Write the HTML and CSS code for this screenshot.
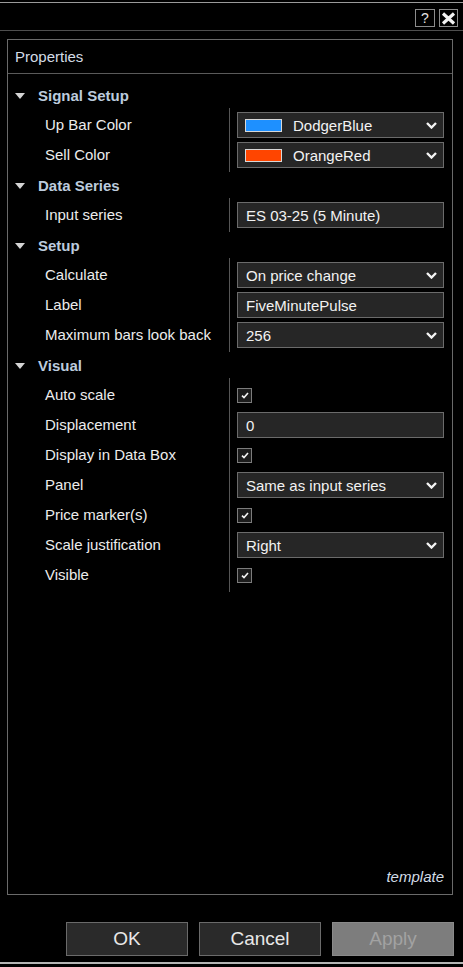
FILE: index.html
```html
<!DOCTYPE html>
<html>
<head>
<meta charset="utf-8">
<link rel="stylesheet" href="styles.css">
</head>
<body>
<div class="window">
  <div class="titlebar">
    <div class="tbtn help">?</div>
    <div class="tbtn close"><svg width="15" height="13" viewBox="0 0 15 13"><path d="M2 1.5 L13 11.5 M13 1.5 L2 11.5" stroke="#f2f2f2" stroke-width="3.2" stroke-linecap="butt"/></svg></div>
  </div>
  <div class="panel">
    <div class="panel-header">Properties</div>
    <div class="panel-body">
      <section class="group">
        <div class="group-head"><span class="caret"></span>Signal Setup</div>
        <div class="props">
          <div class="labels">
            <div class="label">Up Bar Color</div>
            <div class="label">Sell Color</div>
          </div>
          <div class="values">
            <div class="cell"><div class="field select swatched"><span class="swatch blue"></span><span class="text">DodgerBlue</span><svg class="chev" width="11" height="7" viewBox="0 0 11 7"><path d="M1 1 L5.5 5.5 L10 1" fill="none" stroke="#f4f4f4" stroke-width="2.4"/></svg></div></div>
            <div class="cell"><div class="field select swatched"><span class="swatch red"></span><span class="text">OrangeRed</span><svg class="chev" width="11" height="7" viewBox="0 0 11 7"><path d="M1 1 L5.5 5.5 L10 1" fill="none" stroke="#f4f4f4" stroke-width="2.4"/></svg></div></div>
          </div>
        </div>
      </section>
      <section class="group">
        <div class="group-head"><span class="caret"></span>Data Series</div>
        <div class="props">
          <div class="labels">
            <div class="label">Input series</div>
          </div>
          <div class="values">
            <div class="cell"><div class="field"><span class="text">ES 03-25 (5 Minute)</span></div></div>
          </div>
        </div>
      </section>
      <section class="group">
        <div class="group-head"><span class="caret"></span>Setup</div>
        <div class="props">
          <div class="labels">
            <div class="label">Calculate</div>
            <div class="label">Label</div>
            <div class="label">Maximum bars look back</div>
          </div>
          <div class="values">
            <div class="cell"><div class="field select"><span class="text">On price change</span><svg class="chev" width="11" height="7" viewBox="0 0 11 7"><path d="M1 1 L5.5 5.5 L10 1" fill="none" stroke="#f4f4f4" stroke-width="2.4"/></svg></div></div>
            <div class="cell"><div class="field"><span class="text">FiveMinutePulse</span></div></div>
            <div class="cell"><div class="field select"><span class="text">256</span><svg class="chev" width="11" height="7" viewBox="0 0 11 7"><path d="M1 1 L5.5 5.5 L10 1" fill="none" stroke="#f4f4f4" stroke-width="2.4"/></svg></div></div>
          </div>
        </div>
      </section>
      <section class="group">
        <div class="group-head"><span class="caret"></span>Visual</div>
        <div class="props">
          <div class="labels">
            <div class="label">Auto scale</div>
            <div class="label">Displacement</div>
            <div class="label">Display in Data Box</div>
            <div class="label">Panel</div>
            <div class="label">Price marker(s)</div>
            <div class="label">Scale justification</div>
            <div class="label">Visible</div>
          </div>
          <div class="values">
            <div class="cell"><span class="check"><svg width="8" height="7" viewBox="0 0 8 7"><path d="M1 3.6 L3 5.6 L7 1" fill="none" stroke="#f4f4f4" stroke-width="1.6"/></svg></span></div>
            <div class="cell"><div class="field"><span class="text">0</span></div></div>
            <div class="cell"><span class="check"><svg width="8" height="7" viewBox="0 0 8 7"><path d="M1 3.6 L3 5.6 L7 1" fill="none" stroke="#f4f4f4" stroke-width="1.6"/></svg></span></div>
            <div class="cell"><div class="field select"><span class="text">Same as input series</span><svg class="chev" width="11" height="7" viewBox="0 0 11 7"><path d="M1 1 L5.5 5.5 L10 1" fill="none" stroke="#f4f4f4" stroke-width="2.4"/></svg></div></div>
            <div class="cell"><span class="check"><svg width="8" height="7" viewBox="0 0 8 7"><path d="M1 3.6 L3 5.6 L7 1" fill="none" stroke="#f4f4f4" stroke-width="1.6"/></svg></span></div>
            <div class="cell"><div class="field select"><span class="text">Right</span><svg class="chev" width="11" height="7" viewBox="0 0 11 7"><path d="M1 1 L5.5 5.5 L10 1" fill="none" stroke="#f4f4f4" stroke-width="2.4"/></svg></div></div>
            <div class="cell"><span class="check"><svg width="8" height="7" viewBox="0 0 8 7"><path d="M1 3.6 L3 5.6 L7 1" fill="none" stroke="#f4f4f4" stroke-width="1.6"/></svg></span></div>
          </div>
        </div>
      </section>
      <div class="template">template</div>
    </div>
  </div>
  <div class="buttons">
    <div class="btn">OK</div>
    <div class="btn">Cancel</div>
    <div class="btn disabled">Apply</div>
  </div>
  <div class="bottomline"></div>
</div>
</body>
</html>
```

FILE: styles.css
```css
* { box-sizing: border-box; }
html, body { margin: 0; padding: 0; background: #000; }
body {
  font-family: "Liberation Sans", Arial, sans-serif;
  font-size: 15px;
  color: #ececec;
}
.window {
  width: 463px;
  height: 967px;
  display: flex;
  flex-direction: column;
  padding-top: 2px;
}
.titlebar {
  border-top: 1px solid #9a9a9a;
  border-bottom: 1px solid #4e4e4e;
  height: 29px;
  display: flex;
  justify-content: flex-end;
  align-items: flex-start;
  gap: 4px;
  padding: 6px 5px 0 0;
}
.tbtn {
  width: 20px;
  height: 18px;
  border: 1px solid #8c8c8c;
  display: flex;
  align-items: center;
  justify-content: center;
}
.help {
  color: #e4e4e4;
  font-size: 14px;
  line-height: 1;
}
.close { width: 19px; }
.panel {
  margin: 8px 10px 0 7px;
  height: 856px;
  border: 1px solid #6a6a6a;
  display: flex;
  flex-direction: column;
}
.panel-header {
  height: 34px;
  border-bottom: 1px solid #5a5a5a;
  display: flex;
  align-items: center;
  padding-left: 7px;
  color: #d3dce6;
}
.panel-body {
  flex: 1;
  display: flex;
  flex-direction: column;
  padding-top: 6px;
}
.group-head {
  height: 30px;
  display: flex;
  align-items: center;
  padding-left: 7px;
  font-weight: bold;
  color: #bccbdd;
}
.caret {
  width: 0;
  height: 0;
  border-left: 5px solid transparent;
  border-right: 5px solid transparent;
  border-top: 6px solid #d4d4d4;
  margin-right: 13px;
  margin-top: 1px;
}
.props {
  display: flex;
}
.labels {
  width: 221px;
}
.label {
  height: 30px;
  line-height: 30px;
  padding-left: 37px;
  color: #ececec;
  white-space: nowrap;
}
.values {
  flex: 1;
  border-left: 1px solid #565656;
  padding: 2px 8px 2px 7px;
  margin: -2px 0;
}
.cell {
  height: 30px;
  display: flex;
  align-items: center;
}
.field {
  width: 100%;
  height: 26px;
  border: 1px solid #6b6b6b;
  background: #262626;
  display: flex;
  align-items: center;
  padding: 0 6px 0 8px;
  color: #f2f2f2;
  white-space: nowrap;
}
.field.swatched { padding-left: 7px; }
.swatch {
  width: 37px;
  height: 13px;
  border: 1px solid #d8d8d8;
  margin-right: 11px;
  flex: none;
}
.swatch.blue { background: #1e90ff; }
.swatch.red { background: #ff4500; }
.chev {
  margin-left: auto;
  flex: none;
}
.check {
  width: 15px;
  height: 15px;
  border: 1px solid #7c7c7c;
  background: #1c1c1c;
  display: flex;
  align-items: center;
  justify-content: center;
}
.template {
  margin-top: auto;
  text-align: right;
  font-style: italic;
  color: #d3dce6;
  line-height: 17px;
  padding: 0 8px 9px 0;
}
.buttons {
  display: flex;
  justify-content: flex-end;
  gap: 11px;
  padding-right: 9px;
  margin-top: 27px;
}
.btn {
  width: 122px;
  height: 34px;
  border: 1px solid #6a6a6a;
  background: #2a2a2a;
  color: #e8e8e8;
  font-size: 19px;
  display: flex;
  align-items: center;
  justify-content: center;
}
.btn.disabled {
  background: #7d7d7d;
  border-color: #8a8a8a;
  color: #a2a2a2;
}
.bottomline {
  margin-top: 6px;
  height: 2px;
  background: #b4b4b4;
}
```
